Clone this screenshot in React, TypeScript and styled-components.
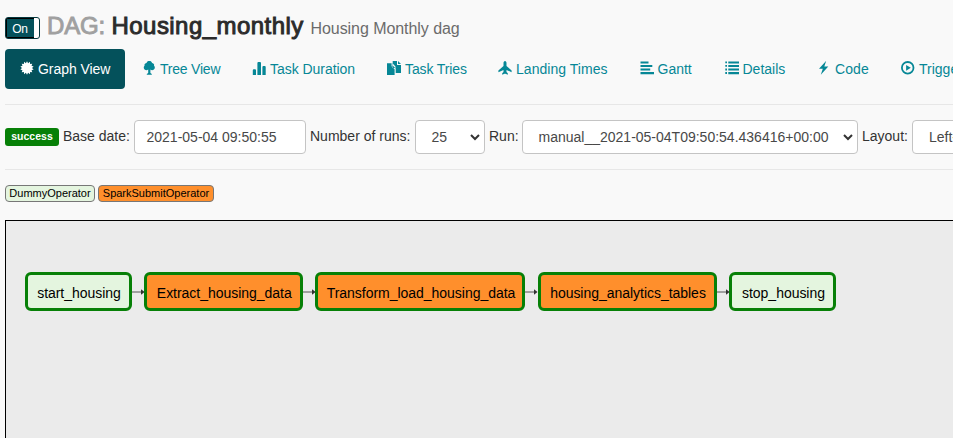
import React from 'react';
import styled, { createGlobalStyle } from 'styled-components';

const Global = createGlobalStyle`
  *, *::before, *::after { box-sizing: border-box; }
  html, body { margin: 0; height: 100%; overflow: hidden; background: #f9f9f9; }
  body { font: 14px/20px "Liberation Sans", Arial, sans-serif; color: #333; }
`;

const Page = styled.main`
  height: 438px;
  padding-left: 5px;
  display: flex;
  flex-direction: column;
  overflow: hidden;
  white-space: nowrap;
`;

const Header = styled.header`
  display: flex;
  height: 49px;
  padding-top: 12px;
`;

const Toggle = styled.div`
  width: 35px;
  height: 22px;
  margin: 5px 7px 0 0;
  display: flex;
  border: 1px solid #04373d;
  border-radius: 3px;
  background: #fff;
  overflow: hidden;
`;

const ToggleLabel = styled.span`
  width: 28px;
  padding-right: 1px;
  border: 1px solid #000;
  border-right-width: 0;
  background: #04515b;
  color: #fff;
  font-size: 12px;
  line-height: 20px;
  text-align: center;
  letter-spacing: -0.2px;
`;

const Title = styled.h3`
  margin: 0;
  display: flex;
  align-items: baseline;
  font-size: 24px;
  line-height: 27px;
  font-weight: 400;
`;

const Prefix = styled.span`
  width: 64.5px;
  color: #a0a0a0;
  letter-spacing: -0.15px;
  -webkit-text-stroke: 0.9px #a0a0a0;
`;

const DagName = styled.span`
  width: 199px;
  color: #2b2b2b;
  letter-spacing: 0.45px;
  -webkit-text-stroke: 0.95px #2b2b2b;
`;

const Description = styled.small`
  font-size: 16px;
  color: #6b6b6b;
  letter-spacing: -0.06px;
`;

const Tabs = styled.nav`
  display: flex;
  gap: 2px;
  height: 40px;
`;

const Tab = styled.a<{ $width: number; $tracking: number; $active?: boolean }>`
  flex: none;
  display: flex;
  gap: 4px;
  width: ${p => p.$width}px;
  padding: 10px 0 10px 15px;
  border-radius: 4px;
  letter-spacing: ${p => p.$tracking}px;
  color: ${p => (p.$active ? '#fff' : '#068796')};
  background: ${p => (p.$active ? '#04515b' : 'transparent')};
`;

const Glyph = styled.svg`
  flex: none;
  width: 14px;
  height: 14px;
  margin-top: 2px;
  fill: currentColor;
`;

const Rule = styled.hr`
  flex: none;
  width: 100%;
  height: 1px;
  margin: 15px 0;
  border: 0;
  background: #e7e7e7;
`;

const Filters = styled.form`
  display: flex;
  height: 34px;
  gap: 4px;
`;

const Status = styled.span`
  flex: none;
  width: 54px;
  height: 18px;
  margin-top: 8px;
  border-radius: 3px;
  background: #078007;
  color: #fff;
  font-size: 10.5px;
  font-weight: 700;
  line-height: 17px;
  text-align: center;
`;

const Label = styled.label<{ $width: number }>`
  flex: none;
  width: ${p => p.$width}px;
  padding-top: 6px;
`;

const Field = styled.div<{ $width: number; $indent: number }>`
  flex: none;
  width: ${p => p.$width}px;
  display: flex;
  align-items: center;
  justify-content: space-between;
  padding: 0 4px 0 ${p => p.$indent}px;
  border: 1px solid #c4c4c4;
  border-radius: 4px;
  background: #fff;
  color: #484848;
`;

const Caret = styled.svg`
  width: 10px;
  height: 7px;
  fill: none;
  stroke: #333;
  stroke-width: 2;
`;

const Legend = styled.div`
  display: flex;
  gap: 3px;
  height: 35px;
`;

const Operator = styled.span<{ $fill: string; $width: number }>`
  width: ${p => p.$width}px;
  height: 17px;
  border: 1px solid #777;
  border-radius: 4px;
  background: ${p => p.$fill};
  color: #000;
  font-size: 11px;
  line-height: 15px;
  text-align: center;
`;

const Canvas = styled.section`
  flex: 1;
  display: flex;
  align-items: flex-start;
  padding: 51px 0 0 18.5px;
  border: 1px solid #000;
  border-width: 1px 0 0 1px;
  background: #ebebeb;
`;

const Task = styled.div<{ $fill: string; $width: number }>`
  flex: none;
  width: ${p => p.$width}px;
  height: 39px;
  padding-left: 2px;
  border: 3px solid #078007;
  border-radius: 6px;
  background: ${p => p.$fill};
  color: #000;
  line-height: 36px;
  letter-spacing: -0.03px;
  text-align: center;
`;

const Arrow = styled.svg`
  flex: none;
  width: 12.5px;
  height: 39px;
`;

const burst = Array.from({ length: 28 }, (_, i) => {
  const r = i % 2 ? 5 : 6.8;
  const a = (i * Math.PI) / 14;
  return `${(7 + r * Math.sin(a)).toFixed(2)},${(7 - r * Math.cos(a)).toFixed(2)}`;
}).join(' ');

const glyphs: Record<string, React.ReactNode> = {
  graph: <polygon points={burst} />,
  tree: <path d="M7.3 -.1C8.7 -.1 9.8 .7 10 1.9C11.6 1.9 12.5 3.6 12 4.7C13.3 5.8 13 8 11.6 8.8C10.5 9.5 9 9.1 8.4 8.6V12L9.8 13V13.8H4.8V13L6.2 12V8.6C5.4 9.2 3.9 9.5 2.9 8.8C1.6 8 1.3 5.8 2.6 4.7C2.1 3.6 3 1.9 4.6 1.9C4.8 .7 5.9 -.1 7.3 -.1Z" />,
  duration: <path d="M.8 9.2Q.8 8.2 1.8 8.2H3Q4 8.2 4 9.2V14H.8ZM5.4 2Q5.4 1 6.4 1H8Q9 1 9 2V14H5.4ZM10.4 6Q10.4 5 11.4 5H12.7Q13.7 5 13.7 6V14H10.4Z" />,
  tries: <path d="M0 2.3H4.6V5.2L7.6 8.2V14H0ZM5.7 0H10V4H14V12H8.7V7.6L5.7 4.6ZM5.4 2.3L8.5 5.4V7H5.4ZM11 0L14 3H11Z" fillRule="evenodd" />,
  landing: <path d="M7 0C7.9 0 8.5 1 8.5 2V5L13.6 9.4V11.2L8.5 8.9V11L9.8 12.3V13.8L7.5 12.7H6.5L4.2 13.8V12.3L5.5 11V8.9L.4 11.2V9.4L5.5 5V2C5.5 1 6.1 0 7 0Z" />,
  gantt: <path d="M.5 .5H8.5V2.5H.5ZM.5 4H12.3V6H.5ZM.5 7.5H10.2V9.5H.5ZM.5 11H14V13.3H.5Z" />,
  details: <path d="M.3 .5H2V2.3H.3ZM3.3 .5H14V2.5H3.3ZM.3 4H2V5.8H.3ZM3.3 4H14V6H3.3ZM.3 7.5H2V9.4H.3ZM3.3 7.5H14V9.6H3.3ZM.3 11H2V13H.3ZM3.3 11H14V13.3H3.3Z" />,
  code: <path d="M9.2 -.2L2 7.7H5.8L3.8 13.8L11.3 5.6H7.3Z" />,
  trigger: <><circle cx="6.7" cy="6.8" r="5.8" fill="none" stroke="currentColor" strokeWidth="1.8" /><path d="M5.1 3.9V9.7L9.8 6.8Z" /></>,
};

const tabs = [
  { icon: 'graph', text: 'Graph View', width: 120, tracking: -0.05 },
  { icon: 'tree', text: 'Tree View', width: 108, tracking: -0.22 },
  { icon: 'duration', text: 'Task Duration', width: 133, tracking: -0.04 },
  { icon: 'tries', text: 'Task Tries', width: 109, tracking: -0.12 },
  { icon: 'landing', text: 'Landing Times', width: 139.5, tracking: 0.04 },
  { icon: 'gantt', text: 'Gantt', width: 83, tracking: 0 },
  { icon: 'details', text: 'Details', width: 90.5, tracking: 0 },
  { icon: 'code', text: 'Code', width: 82, tracking: 0.1 },
  { icon: 'trigger', text: 'Trigger DAG', width: 130, tracking: 0 },
];

const DUMMY = '#e4f5df';
const SPARK = '#ff8f2c';

const tasks = [
  { name: 'start_housing', fill: DUMMY, width: 107 },
  { name: 'Extract_housing_data', fill: SPARK, width: 158.5 },
  { name: 'Transform_load_housing_data', fill: SPARK, width: 210 },
  { name: 'housing_analytics_tables', fill: SPARK, width: 179 },
  { name: 'stop_housing', fill: DUMMY, width: 107 },
];

const Chevron = () => <Caret viewBox="0 0 10 7"><path d="M1 1L5 5L9 1" /></Caret>;

export default function App() {
  return (
    <Page>
      <Global />
      <Header>
        <Toggle><ToggleLabel>On</ToggleLabel></Toggle>
        <Title>
          <Prefix>DAG:</Prefix>
          <DagName>Housing_monthly</DagName>
          <Description>Housing Monthly dag</Description>
        </Title>
      </Header>
      <Tabs>
        {tabs.map(({ icon, text, width, tracking }, i) => (
          <Tab key={icon} $width={width} $tracking={tracking} $active={i === 0}>
            <Glyph viewBox="0 0 14 14">{glyphs[icon]}</Glyph>
            <span>{text}</span>
          </Tab>
        ))}
      </Tabs>
      <Rule />
      <Filters>
        <Status>success</Status>
        <Label $width={67}>Base date:</Label>
        <Field $width={172} $indent={11.5}>2021-05-04 09:50:55</Field>
        <Label $width={101}>Number of runs:</Label>
        <Field $width={70} $indent={15.5}>25<Chevron /></Field>
        <Label $width={29}>Run:</Label>
        <Field $width={336} $indent={15.5}>manual__2021-05-04T09:50:54.436416+00:00<Chevron /></Field>
        <Label $width={46}>Layout:</Label>
        <Field $width={140} $indent={16}>Left-&gt;Right<Chevron /></Field>
      </Filters>
      <Rule />
      <Legend>
        <Operator $fill={DUMMY} $width={90}>DummyOperator</Operator>
        <Operator $fill={SPARK} $width={116}>SparkSubmitOperator</Operator>
      </Legend>
      <Canvas>
        {tasks.map((task, i) => (
          <React.Fragment key={task.name}>
            {i > 0 && (
              <Arrow viewBox="0 0 12.5 39">
                <path d="M0 20H11" stroke="#555" />
                <path d="M9 17.3L12.5 20L9 22.7Z" fill="#333" />
              </Arrow>
            )}
            <Task $fill={task.fill} $width={task.width}>{task.name}</Task>
          </React.Fragment>
        ))}
      </Canvas>
    </Page>
  );
}
